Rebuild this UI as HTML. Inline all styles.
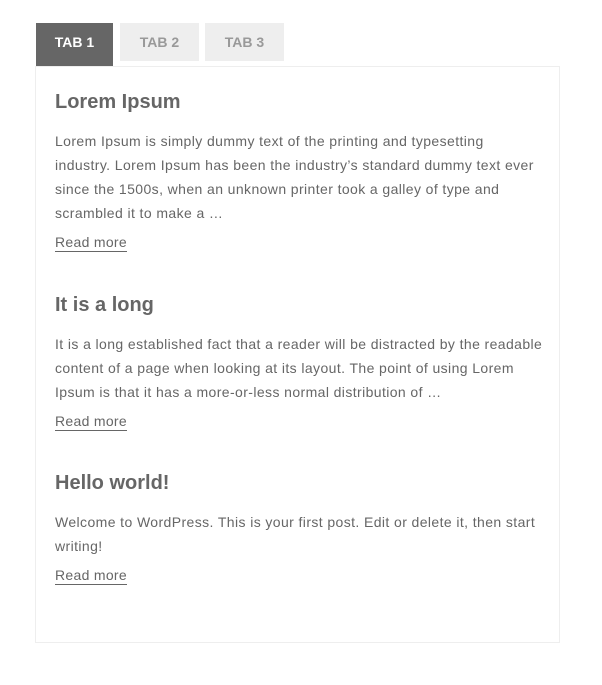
<!DOCTYPE html>
<html><head><meta charset="utf-8"><style>
body{margin:0;background:#fff;font-family:"Liberation Sans",sans-serif;color:#666;}
.tabs{position:absolute;left:36px;top:23px;}
.tab{position:absolute;top:0;height:38px;background:#eee;color:#999;font-weight:bold;font-size:14px;text-align:center;line-height:39px;}
.t1{left:0;width:77px;height:43px;background:#666;color:#fff;}
.t2{left:84px;width:79px;}
.t3{left:169px;width:79px;}
.panel{position:absolute;left:35px;top:66px;width:523px;height:575px;border:1px solid #eee;}
.post{position:absolute;left:19px;width:500px;}
h2{margin:0;font-size:20px;font-weight:bold;color:#666;line-height:28px;}
p{margin:0;font-size:14px;line-height:24px;white-space:nowrap;letter-spacing:0.4px;}
a{display:inline-block;color:#666;font-size:14px;text-decoration:none;border-bottom:1px solid #666;line-height:18px;letter-spacing:0.3px;}
</style></head><body>
<div class="tabs"><div class="tab t1">TAB 1</div><div class="tab t2">TAB 2</div><div class="tab t3">TAB 3</div></div>
<div class="panel">
<div class="post" style="top:21px">
<h2>Lorem Ipsum</h2>
<p style="margin-top:13px">Lorem Ipsum is simply dummy text of the printing and typesetting<br>industry. Lorem Ipsum has been the industry’s standard dummy text ever<br>since the 1500s, when an unknown printer took a galley of type and<br>scrambled it to make a …</p>
<a style="margin-top:8px">Read more</a>
</div>
<div class="post" style="top:224px">
<h2>It is a long</h2>
<p style="margin-top:13px">It is a long established fact that a reader will be distracted by the readable<br>content of a page when looking at its layout. The point of using Lorem<br>Ipsum is that it has a more-or-less normal distribution of …</p>
<a style="margin-top:8px">Read more</a>
</div>
<div class="post" style="top:402px">
<h2>Hello world!</h2>
<p style="margin-top:13px">Welcome to WordPress. This is your first post. Edit or delete it, then start<br>writing!</p>
<a style="margin-top:8px">Read more</a>
</div>
</div>
</body></html>
